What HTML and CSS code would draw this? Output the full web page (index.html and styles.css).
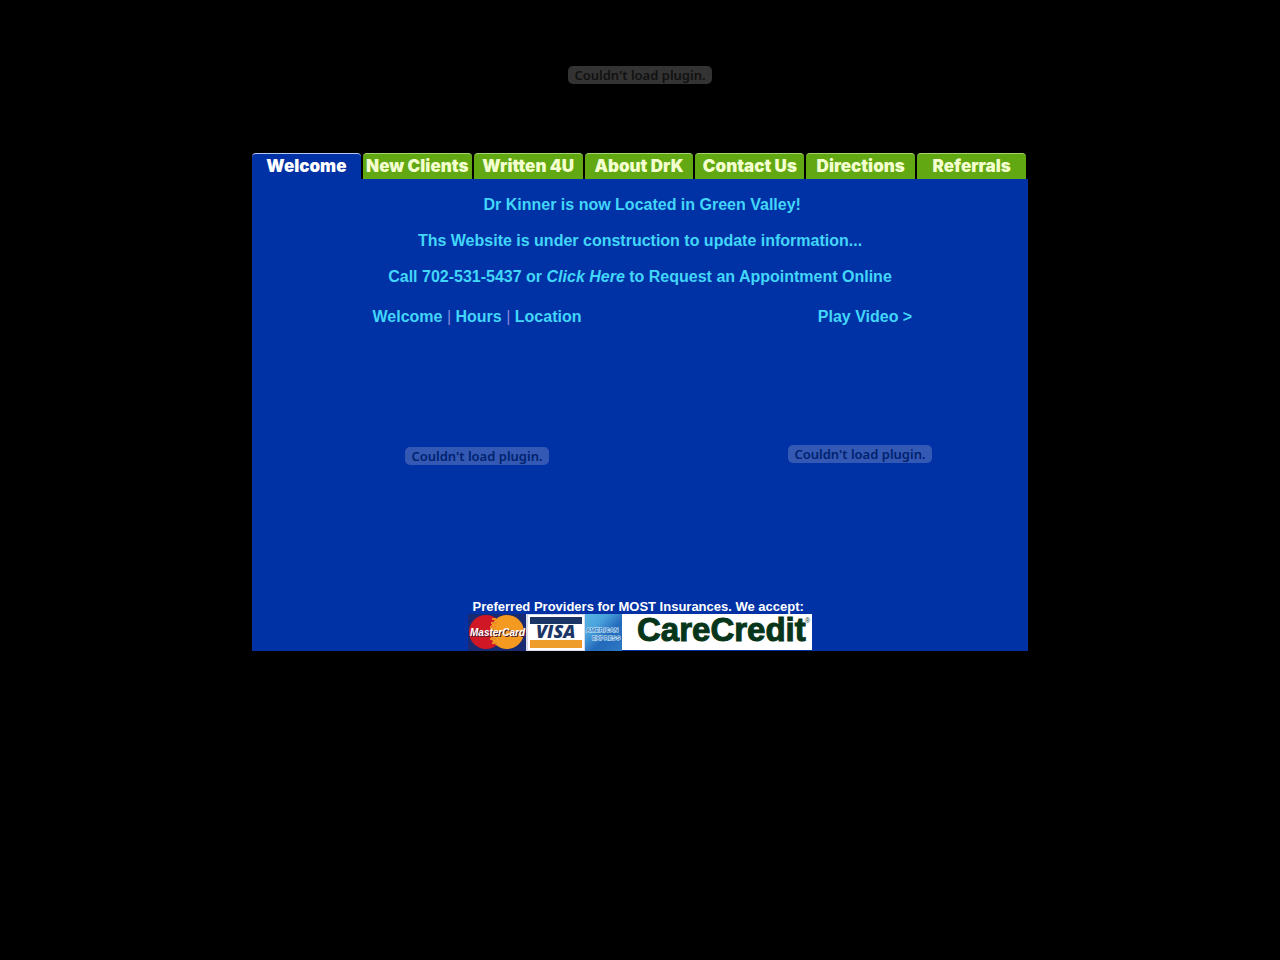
FILE: index.html
```html
<!DOCTYPE html>
<html lang="en">
<head>
<meta charset="utf-8">
<title>Dr Kinner</title>
<meta name="viewport" content="width=device-width, initial-scale=1">
<link rel="stylesheet" href="styles.css">
</head>
<body>
<header class="banner"><span class="plugin plugin-dark">Couldn't load plugin.</span></header>
<div class="site">
  <nav class="tabs" aria-label="Main">
    <a class="tab tab-active" href="#" aria-current="page">Welcome</a>
    <a class="tab" href="#">New Clients</a>
    <a class="tab" href="#">Written 4U</a>
    <a class="tab" href="#">About DrK</a>
    <a class="tab" href="#">Contact Us</a>
    <a class="tab" href="#">Directions</a>
    <a class="tab" href="#">Referrals</a>
  </nav>
  <main class="content">
    <p class="notice">&nbsp;Dr Kinner is now Located in Green Valley!</p>
    <p class="notice">Ths Website is under construction to update information...</p>
    <p class="notice">Call 702-531-5437 or <a class="click" href="#">Click Here</a> to Request an Appointment Online</p>
    <div class="columns">
      <section class="column">
        <div class="links"><a href="#">Welcome</a> <span class="bar">|</span> <a href="#">Hours</a> <span class="bar">|</span> <a href="#">Location</a></div>
        <div class="media"><span class="plugin">Couldn't load plugin.</span></div>
      </section>
      <section class="column">
        <div class="links"><a href="#">Play Video &gt;</a></div>
        <div class="media media-video"><span class="plugin">Couldn't load plugin.</span></div>
      </section>
    </div>
    <footer class="payment">
      <p class="providers">Preferred Providers for MOST Insurances. We accept:&nbsp;</p>
      <svg class="cards" width="344" height="37" viewBox="0 0 344 37" role="img" aria-label="Accepted cards">
        <defs>
          <linearGradient id="amex" x1="0" y1="0" x2="1" y2="1"><stop offset="0" stop-color="#58b4e4"/><stop offset=".3" stop-color="#4ba3dc"/><stop offset=".6" stop-color="#2369ba"/><stop offset="1" stop-color="#2d78c4"/></linearGradient>
        </defs>
        <rect width="58" height="37" fill="#182a72"/>
        <circle cx="18" cy="18" r="17" fill="#cf1726"/>
        <circle cx="39" cy="18" r="17" fill="#f59a20"/>
        <path d="M28 5H24M29 9H23M28 13H22M28 25H22M29 29H24" stroke="#ec8c26" stroke-width="2"/>
        <text class="logo-master logo-shade" x="3" y="23">MasterCard</text>
        <text class="logo-master" x="2" y="22">MasterCard</text>
        <rect x="58" width="59" height="37" fill="#d8dcec"/>
        <rect x="60" y="1" width="56" height="35" fill="#fff"/>
        <rect x="62" y="3" width="52" height="7" fill="#1c3567"/>
        <rect x="62" y="26" width="52" height="8" fill="#ee9d2b"/>
        <text class="logo-visa" x="68" y="24">VISA</text>
        <rect x="117" width="37" height="37" fill="url(#amex)"/>
        <text class="logo-amex" x="118" y="18">AMERICAN</text>
        <text class="logo-amex" x="124" y="26">EXPRESS</text>
        <rect x="154" width="190" height="36" fill="#fff"/>
        <text class="logo-care" x="169" y="27">CareCredit</text>
        <text class="logo-reg" x="337" y="9">®</text>
      </svg>
    </footer>
  </main>
</div>
</body>
</html>
```
FILE: styles.css
```css
* { box-sizing: border-box; }
body { margin: 0; background: #000; font-family: "Liberation Sans", Arial, sans-serif; }
a { color: inherit; text-decoration: none; }
.banner { height: 152px; display: flex; align-items: center; justify-content: center; padding-bottom: 2px; }
.plugin { display: block; padding: 0 6px; border-radius: 5px; background: #3359b5; color: #00226f; font: 600 13px/18px "Noto Sans", sans-serif; white-space: nowrap; }
.plugin-dark { background: #333; color: #111; }
.site { max-width: 776px; margin: 0 auto; background: #0031a5; }
.tabs { display: grid; grid-template-columns: repeat(7, 1fr); gap: 2px; padding: 1px 2px 0 0; background: #000; }
.tab { height: 26px; border-top: 1px solid #a5d66a; border-radius: 4px 4px 0 0; background: #62a812; color: #f4ffd0; font: 900 17px/25px Inter, sans-serif; text-align: center; white-space: nowrap; }
.tab-active { border-color: #b5c8f5; background: #0031a5; color: #fff; }
.content { padding-top: 17px; text-align: center; color: #42d6fa; font-weight: bold; font-size: 16px; line-height: 18px; }
.notice { margin: 0 0 18px; }
.click { font-style: italic; }
.columns { display: grid; grid-template-columns: 450fr 326fr; padding-top: 4px; }
.bar { color: #8b86dc; font-weight: normal; }
.links { margin-bottom: 3px; }
.media { height: 254px; display: flex; align-items: center; justify-content: center; }
.media-video { height: 250px; padding-right: 10px; }
.payment { padding-top: 16px; }
.providers { margin: 0; color: #fff; font-size: 13px; line-height: 15px; }
.cards { display: block; margin: 0 auto; overflow: visible; }
.logo-master { font: italic bold 10px "Liberation Sans", sans-serif; fill: #fff; }
.logo-shade { fill: #4a1830; }
.logo-visa { font: italic 800 18px "Open Sans", sans-serif; fill: #1c3567; }
.logo-amex { font: bold 6px "Liberation Sans", sans-serif; fill: #2d78c4; stroke: #d9effc; stroke-width: 1px; paint-order: stroke; }
.logo-care { font: bold 33px "Liberation Sans", sans-serif; fill: #07351a; stroke: #07351a; stroke-width: 1px; }
.logo-reg { font: 7px "Liberation Sans", sans-serif; fill: #07351a; }
```
